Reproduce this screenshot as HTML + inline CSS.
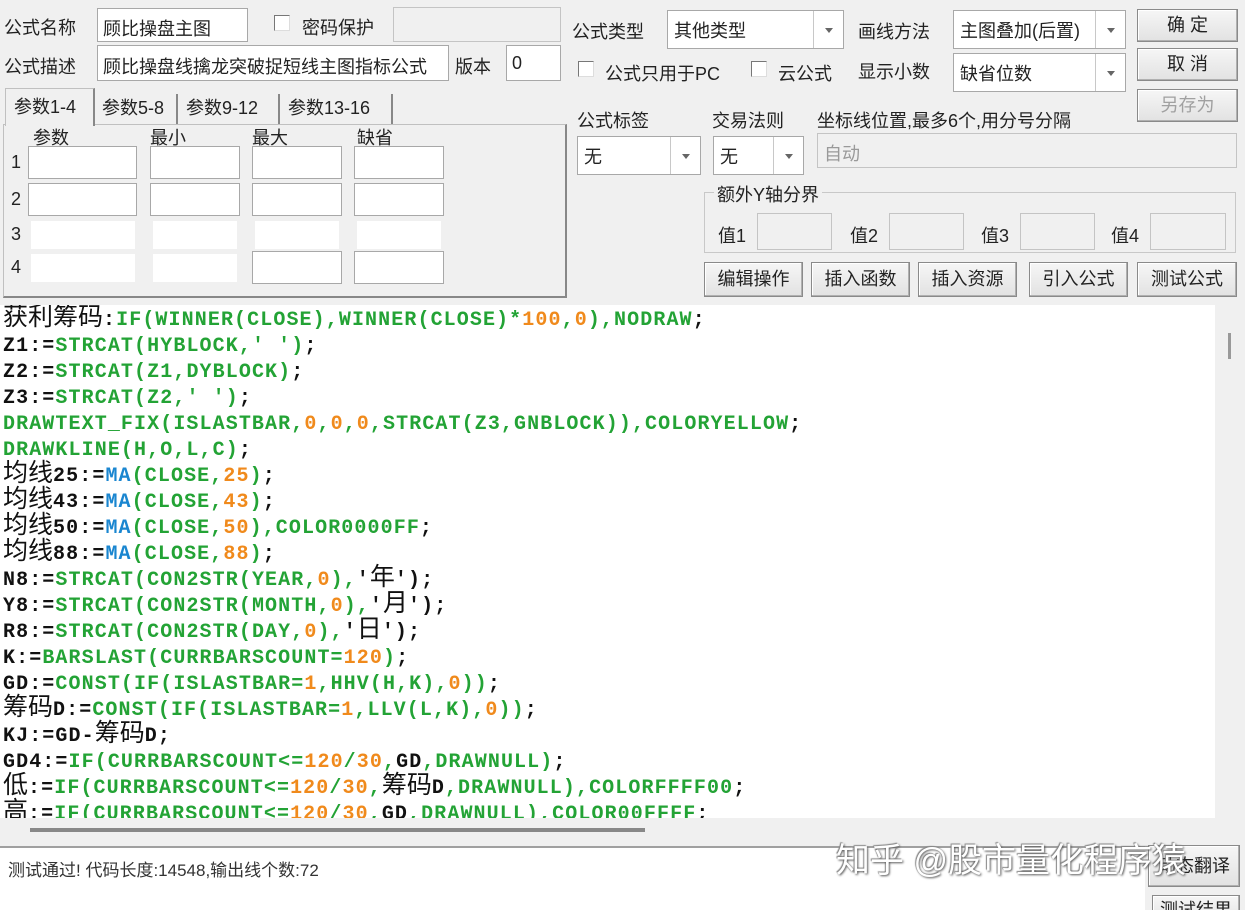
<!DOCTYPE html>
<html><head><meta charset="utf-8"><style>
*{box-sizing:border-box;margin:0;padding:0}
html,body{width:1245px;height:910px;overflow:hidden}
body{background:#f0f0f0;position:relative;font-family:"Liberation Sans","Noto Sans CJK SC",sans-serif;font-size:18px;color:#222}
.a{position:absolute;white-space:nowrap}
.in{position:absolute;background:#fff;border:1px solid #a8a8a8}
.dis{position:absolute;background:#f0f0f0;border:1px solid #c4c4c4}
.sel{position:absolute;background:#fff;border:1px solid #a8a8a8}
.sel .ar{position:absolute;right:0;top:0;bottom:0;width:30px;border-left:1px solid #c8c8c8}
.sel .ar:after{content:"";position:absolute;left:11px;top:50%;margin-top:-2px;border-left:4px solid transparent;border-right:4px solid transparent;border-top:5px solid #666}
.sel span{position:absolute;left:6px;top:50%;transform:translateY(-50%)}
.btn{position:absolute;background:linear-gradient(#f6f6f6,#e2e2e2);border:1px solid #8a8a8a;box-shadow:inset -1px -1px 0 #b0b0b0,inset 1px 1px 0 #fff;text-align:center;font-size:18px}
.cb{position:absolute;width:16px;height:16px;border:1px solid #777;background:#fff;border-right-color:#ddd;border-bottom-color:#ddd}
.code{position:absolute;left:0;top:305px;width:1215px;height:513px;background:#fff;overflow:hidden}
.l{position:absolute;left:3px;margin-top:3px;font-family:"Liberation Mono",monospace;font-weight:bold;font-size:20px;letter-spacing:1.1px;color:#111;white-space:pre;height:26px;line-height:26px}
.l i{font-style:normal;font-family:"Noto Sans CJK SC",sans-serif;font-weight:normal;font-size:25px;letter-spacing:0;line-height:0}
.g{color:#23a335}.o{color:#f08a1c}.b{color:#1a86d0}
</style></head><body>
<div class="a" style="left:4px;top:14px">公式名称</div>
<div class="in" style="left:97px;top:8px;width:151px;height:34px"><span class="a" style="left:5px;top:6px">顾比操盘主图</span></div>
<div class="cb" style="left:274px;top:15px"></div>
<div class="a" style="left:302px;top:14px">密码保护</div>
<div class="dis" style="left:393px;top:7px;width:168px;height:35px"></div>
<div class="a" style="left:4px;top:53px">公式描述</div>
<div class="in" style="left:97px;top:45px;width:352px;height:36px;overflow:hidden"><span class="a" style="left:5px;top:7px">顾比操盘线擒龙突破捉短线主图指标公式</span></div>
<div class="a" style="left:455px;top:53px">版本</div>
<div class="in" style="left:506px;top:45px;width:55px;height:36px"><span class="a" style="left:5px;top:7px">0</span></div>

<div class="a" style="left:572px;top:18px">公式类型</div>
<div class="sel" style="left:667px;top:10px;width:177px;height:39px"><span>其他类型</span><div class="ar"></div></div>
<div class="a" style="left:858px;top:18px">画线方法</div>
<div class="sel" style="left:953px;top:10px;width:173px;height:39px"><span>主图叠加(后置)</span><div class="ar"></div></div>
<div class="btn" style="left:1137px;top:9px;width:101px;height:33px;line-height:31px">确 定</div>
<div class="cb" style="left:578px;top:61px"></div>
<div class="a" style="left:605px;top:60px">公式只用于PC</div>
<div class="cb" style="left:751px;top:61px"></div>
<div class="a" style="left:778px;top:60px">云公式</div>
<div class="a" style="left:858px;top:58px">显示小数</div>
<div class="sel" style="left:953px;top:53px;width:173px;height:39px"><span>缺省位数</span><div class="ar"></div></div>
<div class="btn" style="left:1137px;top:48px;width:101px;height:33px;line-height:31px">取 消</div>
<div class="btn" style="left:1137px;top:89px;width:101px;height:33px;line-height:31px;color:#a0a0a0">另存为</div>

<div class="a" style="left:577px;top:107px">公式标签</div>
<div class="sel" style="left:577px;top:136px;width:124px;height:39px"><span>无</span><div class="ar"></div></div>
<div class="a" style="left:712px;top:107px">交易法则</div>
<div class="sel" style="left:713px;top:136px;width:91px;height:39px"><span>无</span><div class="ar"></div></div>
<div class="a" style="left:817px;top:107px">坐标线位置,最多6个,用分号分隔</div>
<div class="dis" style="left:817px;top:133px;width:420px;height:35px"><span class="a" style="left:6px;top:6px;color:#999">自动</span></div>
<div class="a" style="left:704px;top:192px;width:532px;height:61px;border:1px solid #c8c8c8"></div>
<div class="a" style="left:714px;top:181px;background:#f0f0f0;padding:0 3px">额外Y轴分界</div>
<div class="a" style="left:718px;top:222px">值1</div><div class="dis" style="left:757px;top:213px;width:75px;height:37px"></div>
<div class="a" style="left:850px;top:222px">值2</div><div class="dis" style="left:889px;top:213px;width:75px;height:37px"></div>
<div class="a" style="left:981px;top:222px">值3</div><div class="dis" style="left:1020px;top:213px;width:75px;height:37px"></div>
<div class="a" style="left:1111px;top:222px">值4</div><div class="dis" style="left:1150px;top:213px;width:76px;height:37px"></div>
<div class="btn" style="left:704px;top:262px;width:99px;height:35px;line-height:33px">编辑操作</div>
<div class="btn" style="left:811px;top:262px;width:99px;height:35px;line-height:33px">插入函数</div>
<div class="btn" style="left:918px;top:262px;width:99px;height:35px;line-height:33px">插入资源</div>
<div class="btn" style="left:1029px;top:262px;width:99px;height:35px;line-height:33px">引入公式</div>
<div class="btn" style="left:1137px;top:262px;width:100px;height:35px;line-height:33px">测试公式</div>

<div class="a" style="left:3px;top:124px;width:564px;height:174px;border:1px solid #c0c0c0;border-right:2px solid #888;border-bottom:2px solid #888"></div>
<div class="a" style="left:5px;top:88px;width:90px;height:38px;background:#f0f0f0;border:1px solid #c0c0c0;border-bottom:none;border-right:2px solid #888;padding:4px 0 0 8px">参数1-4</div>
<div class="a" style="left:96px;top:94px;padding-left:6px;border-right:2px solid #888;width:82px;height:30px">参数5-8</div>
<div class="a" style="left:180px;top:94px;padding-left:6px;border-right:2px solid #888;width:100px;height:30px">参数9-12</div>
<div class="a" style="left:282px;top:94px;padding-left:6px;border-right:2px solid #888;width:111px;height:30px">参数13-16</div>
<div class="a" style="left:33px;top:124px">参数</div>
<div class="a" style="left:150px;top:124px">最小</div>
<div class="a" style="left:252px;top:124px">最大</div>
<div class="a" style="left:357px;top:124px">缺省</div>
<div class="a" style="left:11px;top:152px">1</div><div class="a" style="left:11px;top:189px">2</div><div class="a" style="left:11px;top:224px">3</div><div class="a" style="left:11px;top:257px">4</div>
<div class="in" style="left:28px;top:146px;width:109px;height:33px"></div>
<div class="in" style="left:150px;top:146px;width:90px;height:33px"></div>
<div class="in" style="left:252px;top:146px;width:90px;height:33px"></div>
<div class="in" style="left:354px;top:146px;width:90px;height:33px"></div>
<div class="in" style="left:28px;top:183px;width:109px;height:33px"></div>
<div class="in" style="left:150px;top:183px;width:90px;height:33px"></div>
<div class="in" style="left:252px;top:183px;width:90px;height:33px"></div>
<div class="in" style="left:354px;top:183px;width:90px;height:33px"></div>
<div class="a" style="left:31px;top:221px;width:104px;height:28px;background:#fff"></div>
<div class="a" style="left:153px;top:221px;width:84px;height:28px;background:#fff"></div>
<div class="a" style="left:255px;top:221px;width:84px;height:28px;background:#fff"></div>
<div class="a" style="left:357px;top:221px;width:84px;height:28px;background:#fff"></div>
<div class="a" style="left:31px;top:254px;width:104px;height:28px;background:#fff"></div>
<div class="a" style="left:153px;top:254px;width:84px;height:28px;background:#fff"></div>
<div class="in" style="left:252px;top:251px;width:90px;height:33px"></div>
<div class="in" style="left:354px;top:251px;width:90px;height:33px"></div>

<div class="code">
<div class="l" style="top:0px"><i>获利筹码</i>:<span class="g">IF(WINNER(CLOSE),WINNER(CLOSE)*</span><span class="o">100</span><span class="g">,</span><span class="o">0</span><span class="g">),NODRAW</span>;</div>
<div class="l" style="top:26px">Z1:=<span class="g">STRCAT(HYBLOCK,' ')</span>;</div>
<div class="l" style="top:52px">Z2:=<span class="g">STRCAT(Z1,DYBLOCK)</span>;</div>
<div class="l" style="top:78px">Z3:=<span class="g">STRCAT(Z2,' ')</span>;</div>
<div class="l" style="top:104px"><span class="g">DRAWTEXT_FIX(ISLASTBAR,</span><span class="o">0</span><span class="g">,</span><span class="o">0</span><span class="g">,</span><span class="o">0</span><span class="g">,STRCAT(Z3,GNBLOCK)),COLORYELLOW</span>;</div>
<div class="l" style="top:130px"><span class="g">DRAWKLINE(H,O,L,C)</span>;</div>
<div class="l" style="top:156px"><i>均线</i>25:=<span class="b">MA</span><span class="g">(CLOSE,</span><span class="o">25</span><span class="g">)</span>;</div>
<div class="l" style="top:182px"><i>均线</i>43:=<span class="b">MA</span><span class="g">(CLOSE,</span><span class="o">43</span><span class="g">)</span>;</div>
<div class="l" style="top:208px"><i>均线</i>50:=<span class="b">MA</span><span class="g">(CLOSE,</span><span class="o">50</span><span class="g">),COLOR0000FF</span>;</div>
<div class="l" style="top:234px"><i>均线</i>88:=<span class="b">MA</span><span class="g">(CLOSE,</span><span class="o">88</span><span class="g">)</span>;</div>
<div class="l" style="top:260px">N8:=<span class="g">STRCAT(CON2STR(YEAR,</span><span class="o">0</span><span class="g">),</span>'<i>年</i>');</div>
<div class="l" style="top:286px">Y8:=<span class="g">STRCAT(CON2STR(MONTH,</span><span class="o">0</span><span class="g">),</span>'<i>月</i>');</div>
<div class="l" style="top:312px">R8:=<span class="g">STRCAT(CON2STR(DAY,</span><span class="o">0</span><span class="g">),</span>'<i>日</i>');</div>
<div class="l" style="top:338px">K:=<span class="g">BARSLAST(CURRBARSCOUNT=</span><span class="o">120</span><span class="g">)</span>;</div>
<div class="l" style="top:364px">GD:=<span class="g">CONST(IF(ISLASTBAR=</span><span class="o">1</span><span class="g">,HHV(H,K),</span><span class="o">0</span><span class="g">))</span>;</div>
<div class="l" style="top:390px"><i>筹码</i>D:=<span class="g">CONST(IF(ISLASTBAR=</span><span class="o">1</span><span class="g">,LLV(L,K),</span><span class="o">0</span><span class="g">))</span>;</div>
<div class="l" style="top:416px">KJ:=GD-<i>筹码</i>D;</div>
<div class="l" style="top:442px">GD4:=<span class="g">IF(CURRBARSCOUNT&lt;=</span><span class="o">120</span><span class="g">/</span><span class="o">30</span><span class="g">,</span>GD<span class="g">,DRAWNULL)</span>;</div>
<div class="l" style="top:468px"><i>低</i>:=<span class="g">IF(CURRBARSCOUNT&lt;=</span><span class="o">120</span><span class="g">/</span><span class="o">30</span><span class="g">,</span><i>筹码</i>D<span class="g">,DRAWNULL),COLORFFFF00</span>;</div>
<div class="l" style="top:494px"><i>高</i>:=<span class="g">IF(CURRBARSCOUNT&lt;=</span><span class="o">120</span><span class="g">/</span><span class="o">30</span><span class="g">,</span>GD<span class="g">,DRAWNULL),COLOR00FFFF</span>;</div>
</div>
<div class="a" style="left:1215px;top:305px;width:30px;height:513px;background:#f0f0f0"></div>
<div class="a" style="left:1228px;top:333px;width:3px;height:26px;background:#999"></div>
<div class="a" style="left:30px;top:828px;width:615px;height:4px;background:#888"></div>
<div class="a" style="left:0;top:846px;width:1145px;height:64px;background:#fff;border-top:2px solid #a0a0a0"></div>
<div class="a" style="left:8px;top:856px;font-size:17px;color:#333">测试通过! 代码长度:14548,输出线个数:72</div>
<div class="btn" style="left:1148px;top:845px;width:92px;height:42px;line-height:40px">动态翻译</div>
<div class="btn" style="left:1152px;top:895px;width:88px;height:30px;line-height:28px">测试结果</div>
<div class="a" style="left:836px;top:833px;font-size:34px;color:#fff;text-shadow:1px 1px 2px #555,-1px -1px 1px #888">知乎 @股市量化程序猿</div>
</body></html>
